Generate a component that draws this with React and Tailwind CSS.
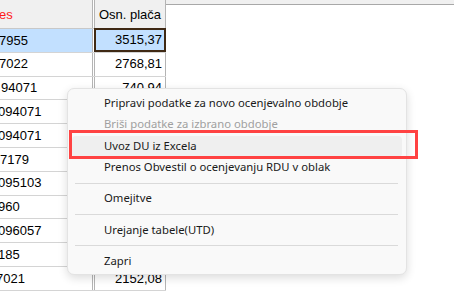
import React from 'react';

const rows = [
  { id: '7955', off: '-ml-[1px]', pay: '3515,37' },
  { id: '7022', off: '-ml-[1px]', pay: '2768,81' },
  { id: '94071', off: 'ml-[1px]', pay: '740,94' },
  { id: '094071', off: '-ml-[2px]', pay: '' },
  { id: '094071', off: '-ml-[2px]', pay: '' },
  { id: '7179', off: 'ml-0', pay: '' },
  { id: '095103', off: '-ml-[2px]', pay: '' },
  { id: '960', off: '-ml-[2px]', pay: '' },
  { id: '096057', off: '-ml-[2px]', pay: '' },
  { id: '185', off: '-ml-[2px]', pay: '' },
  { id: '7021', off: '-ml-[4px]', pay: '2152,08' },
];

const menu = [
  { label: 'Pripravi podatke za novo ocenjevalno obdobje' },
  { label: 'Briši podatke za izbrano obdobje', disabled: true },
  { label: 'Uvoz DU iz Excela', hover: true },
  { label: 'Prenos Obvestil o ocenjevanju RDU v oblak' },
  { sep: true },
  { label: 'Omejitve' },
  { sep: true },
  { label: 'Urejanje tabele(UTD)' },
  { sep: true },
  { label: 'Zapri' },
];

const App = () => {
  return (
    <div className="relative w-[454px] h-[294px] overflow-hidden bg-white font-['Liberation_Sans',Arial,sans-serif] text-[13px] text-black">
      <div className="flex">
        {/* table */}
        <div className="w-[166px] shrink-0">
          <div className="flex h-[29px] bg-[#f0f0f0] border-b border-[#c8c8c8]">
            <div className="w-[93px] border-r border-[#b4b4b4] flex items-center overflow-hidden">
              <span className="text-[#ff1a1a] -ml-[1px] mt-[2px]">es</span>
            </div>
            <div className="w-[1px] bg-white" />
            <div className="w-[72px] border-l border-r border-[#b4b4b4] flex items-center justify-center">
              <span className="mt-[2px]">Osn. plača</span>
            </div>
          </div>
          {rows.map((r, i) => (
            <div key={i} className="flex h-[23.8px] border-b border-[#d4d4d4]">
              <div className={`w-[93px] border-r border-[#b4b4b4] flex items-center overflow-hidden ${i === 0 ? 'bg-[#c2e0ff]' : ''}`}>
                <span className={r.off}>{r.id}</span>
              </div>
              <div className="w-[1px] bg-white" />
              {i === 0 ? (
                <div className="w-[72px] -mt-[1px] h-[24px] border-2 border-[#3f2914] bg-[#c2e0ff] flex items-center justify-end pr-[2px]">
                  {r.pay}
                </div>
              ) : (
                <div className="w-[72px] border-l border-r border-[#b4b4b4] flex items-center justify-end pr-[3px]">
                  {r.pay}
                </div>
              )}
            </div>
          ))}
        </div>
        <div className="flex-1">
          <div className="h-[5px] bg-[#f0f0f0] border-b border-[#a8a8a8]" />
        </div>
      </div>

      {/* context menu */}
      <div className="absolute left-[67px] top-[88px] w-[340px] rounded-[7px] border border-[#e3e3e3] bg-[#f9f9f9] pt-[4px] pb-[2px] shadow-[0_3px_10px_rgba(0,0,0,0.14)] font-['Noto_Sans','Liberation_Sans',sans-serif] text-[11.3px] text-[#1a1a1a]">
        {menu.map((m, i) =>
          m.sep ? (
            <div key={i} className="h-[10px] flex items-center">
              <div className="ml-[7px] mr-[8px] h-px flex-1 bg-[#dadada]" />
            </div>
          ) : (
            <div
              key={i}
              className={`mx-[4px] h-[21.3px] rounded-[4px] pl-[32px] flex items-center ${m.hover ? 'bg-[#efefef]' : ''} ${m.disabled ? 'text-[#a0a0a0]' : ''}`}
            >
              {m.label}
            </div>
          )
        )}
      </div>

      {/* red highlight */}
      <div className="absolute left-[69px] top-[130px] w-[349px] h-[29px] border-[3px] border-[#ff4242]" />
    </div>
  );
};

export default App;
